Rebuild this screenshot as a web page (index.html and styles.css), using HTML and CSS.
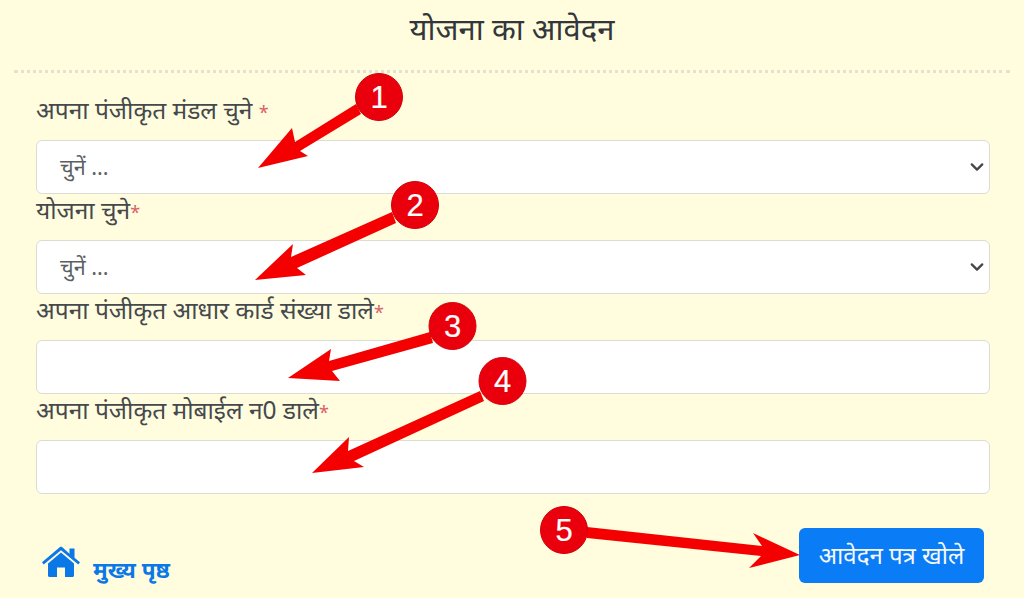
FILE: index.html
```html
<!DOCTYPE html>
<html lang="hi">
<head>
    <meta charset="UTF-8">
    <meta name="viewport" content="width=device-width, initial-scale=1.0">
    <title>योजना का आवेदन</title>
    <link rel="stylesheet" href="styles.css">
</head>
<body>
    <div class="container">
        <h1 class="title">योजना का आवेदन</h1>
        <form class="apply-form">
            <div class="field">
                <label>अपना पंजीकृत मंडल चुने <span class="req">*</span></label>
                <div class="control select">चुनें ...
                    <svg class="chevron" viewBox="0 0 16 16"><path d="M2 5l6 6 6-6" fill="none" stroke="#43474c" stroke-width="2.6" stroke-linecap="round" stroke-linejoin="round"/></svg>
                </div>
            </div>
            <div class="field">
                <label>योजना चुने<span class="req">*</span></label>
                <div class="control select">चुनें ...
                    <svg class="chevron" viewBox="0 0 16 16"><path d="M2 5l6 6 6-6" fill="none" stroke="#43474c" stroke-width="2.6" stroke-linecap="round" stroke-linejoin="round"/></svg>
                </div>
            </div>
            <div class="field">
                <label>अपना पंजीकृत आधार कार्ड संख्या डाले<span class="req">*</span></label>
                <div class="control"></div>
            </div>
            <div class="field">
                <label>अपना पंजीकृत मोबाईल न0 डाले<span class="req">*</span></label>
                <div class="control"></div>
            </div>
            <div class="actions">
                <a class="home-link" href="#">
                    <svg class="home-icon" viewBox="0 0 40 32"><path fill="#0b78e8" d="M20 6.500 7 17.500v12c0 .8.6 1.500 1.500 1.500H16V21.500h8V31h7.500c.9 0 1.500-.7 1.500-1.500v-12z"/><path fill="#0b78e8" d="M39 16.300 33.500 11.800V2.500h-5v5.200L21.300 1.200c-.8-.6-1.900-.6-2.600 0L1 16.300l1.700 2.200L20 4.200 37.300 18.500z"/></svg>
                    <span>मुख्य पृष्ठ</span>
                </a>
                <button type="button" class="submit-btn">आवेदन पत्र खोले</button>
            </div>
        </form>
    </div>

    <svg class="notes" viewBox="0 0 1024 598">
        <g fill="#f40000">
            <polygon points="356,104 361,114 300,151 308,156 258,168 292,128 295,142"/>
            <polygon points="392,212 396,223 297,268 306,275 255,280 293,244 291,257"/>
            <polygon points="430,332 433,343 332,371 340,381 288,378 331,349 329,361"/>
            <polygon points="480,391 484,401 354,461 364,467 312,473 349,437 348,451"/>
            <polygon points="587,527 587,538 761,556 749,568 800,555 753,533 762,546"/>
        </g>
        <g class="dot">
            <circle cx="379" cy="97" r="23.500"/><text x="379" y="107.500">1</text>
            <circle cx="415" cy="205" r="23.500"/><text x="415" y="215.500">2</text>
            <circle cx="452.500" cy="326" r="23.500"/><text x="452.500" y="336.500">3</text>
            <circle cx="502.500" cy="381" r="23.500"/><text x="502.500" y="391.500">4</text>
            <circle cx="564" cy="530" r="23.500"/><text x="564" y="540.500">5</text>
        </g>
    </svg>
</body>
</html>
```

FILE: styles.css
```css
html, body {
    margin: 0;
    padding: 0;
}
body {
    width: 1024px;
    height: 598px;
    overflow: hidden;
    position: relative;
    background: #fffddd;
    color: #45494d;
    font-family: "Noto Sans", "Liberation Sans", sans-serif;
}
.container {
    padding: 0 14px;
}
.title {
    margin: 0;
    height: 70px;
    padding-top: 7px;
    box-sizing: border-box;
    font-size: 31px;
    font-weight: 400;
    line-height: 42px;
    text-align: center;
    color: #33373b;
}
.apply-form {
    border-top: 3px dotted #e2e2d2;
    padding: 21px 20px 0 22px;
}
.field {
    height: 100px;
    display: flex;
    flex-direction: column;
    justify-content: flex-end;
}
.field label {
    font-size: 24.500px;
    line-height: 30px;
    padding-bottom: 13px;
}
.req {
    color: #d9606a;
    font-size: 18px;
}
.control {
    height: 54px;
    box-sizing: border-box;
    background: #fff;
    border: 1px solid #dcdcd4;
    border-radius: 6px;
    padding-left: 23px;
    font-size: 21.500px;
    line-height: 52px;
    color: #5b5f63;
    position: relative;
}
.chevron {
    position: absolute;
    right: 5px;
    top: 19px;
    width: 14px;
    height: 14px;
}
.actions {
    display: flex;
    justify-content: space-between;
    align-items: flex-end;
    margin-top: 34px;
    padding-right: 6px;
}
.home-link {
    display: flex;
    align-items: flex-end;
    gap: 12px;
    margin: 0 0 5px 5px;
    color: #0b78e8;
    font-size: 22.500px;
    font-weight: 700;
    text-decoration: none;
}
.home-link span {
    line-height: 24px;
    margin-bottom: -4px;
}
.home-icon {
    width: 40px;
    height: 32px;
}
.submit-btn {
    width: 185px;
    height: 55px;
    border: none;
    border-radius: 6px;
    background: #0a7cf5;
    color: #f4f8fd;
    font-family: inherit;
    font-size: 24px;
    padding: 0 0 3px;
}
.notes {
    position: absolute;
    left: 0;
    top: 0;
    width: 1024px;
    height: 598px;
}
.dot circle {
    fill: #ea000c;
    stroke: #d00009;
    stroke-width: 1;
}
.dot text {
    fill: #fff;
    stroke: #fff;
    stroke-width: 0.200;
    font-family: "Liberation Sans", sans-serif;
    font-size: 31px;
    text-anchor: middle;
}
```
